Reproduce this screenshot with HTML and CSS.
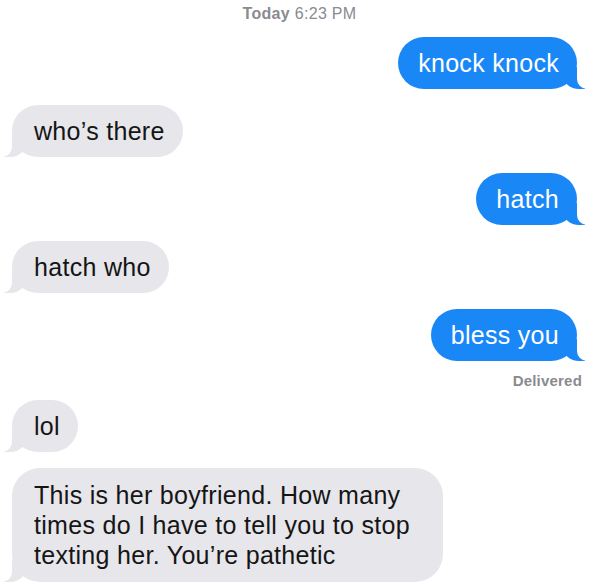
FILE: index.html
```html
<!DOCTYPE html>
<html lang="en">
<head>
<meta charset="utf-8">
<title>Messages</title>
<link rel="stylesheet" href="styles.css">
</head>
<body>
<main class="chat">
  <div class="stamp"><b>Today</b> 6:23 PM</div>
  <div class="bubble sent">knock knock</div>
  <div class="bubble received">who’s there</div>
  <div class="bubble sent">hatch</div>
  <div class="bubble received">hatch who</div>
  <div class="bubble sent">bless you</div>
  <div class="status">Delivered</div>
  <div class="bubble received lol">lol</div>
  <div class="bubble received long">This is her boyfriend. How many times do I have to tell you to stop texting her. You’re pathetic</div>
</main>
</body>
</html>
```
FILE: styles.css
```css
html, body {
  margin: 0;
  padding: 0;
  background: #ffffff;
}

.chat {
  display: flex;
  flex-direction: column;
  padding: 4px 30px 0 12px;
  font-family: "Liberation Sans", Arial, sans-serif;
}

.stamp {
  align-self: center;
  margin-left: 10px;
  height: 20px;
  line-height: 20px;
  font-size: 16px;
  color: #8a8a90;
  letter-spacing: 0.3px;
}

.stamp b {
  font-weight: 700;
}

.bubble {
  position: relative;
  box-sizing: border-box;
  padding: 11px 18px 11px 20px;
  font-size: 25px;
  line-height: 30px;
  letter-spacing: 0.3px;
  border-radius: 26px;
  margin-top: 16px;
  max-width: 431px;
}

.stamp + .bubble {
  margin-top: 13px;
}

.sent {
  align-self: flex-end;
  background: #1a87f6;
  color: #ffffff;
}

.received {
  align-self: flex-start;
  background: #e6e6eb;
  color: #151515;
  padding-left: 22px;
}

.bubble::before,
.bubble::after {
  content: "";
  position: absolute;
  bottom: 0;
  height: 22px;
}

.sent::before {
  right: -8px;
  width: 22px;
  background: #1a87f6;
  border-bottom-left-radius: 16px 14px;
}

.sent::after {
  right: -26px;
  width: 26px;
  background: #ffffff;
  border-bottom-left-radius: 10px;
}

.received::before {
  left: -8px;
  width: 22px;
  background: #e6e6eb;
  border-bottom-right-radius: 16px 14px;
}

.received::after {
  left: -26px;
  width: 26px;
  background: #ffffff;
  border-bottom-right-radius: 10px;
}

.status {
  align-self: flex-end;
  margin-top: 10px;
  margin-right: -5px;
  height: 20px;
  line-height: 20px;
  font-size: 15px;
  font-weight: 700;
  color: #8a8a8f;
  letter-spacing: 0.2px;
}

.status + .bubble {
  margin-top: 9px;
}

.long {
  width: 431px;
  padding-top: 12px;
  padding-bottom: 12px;
  border-radius: 28px;
}
```
